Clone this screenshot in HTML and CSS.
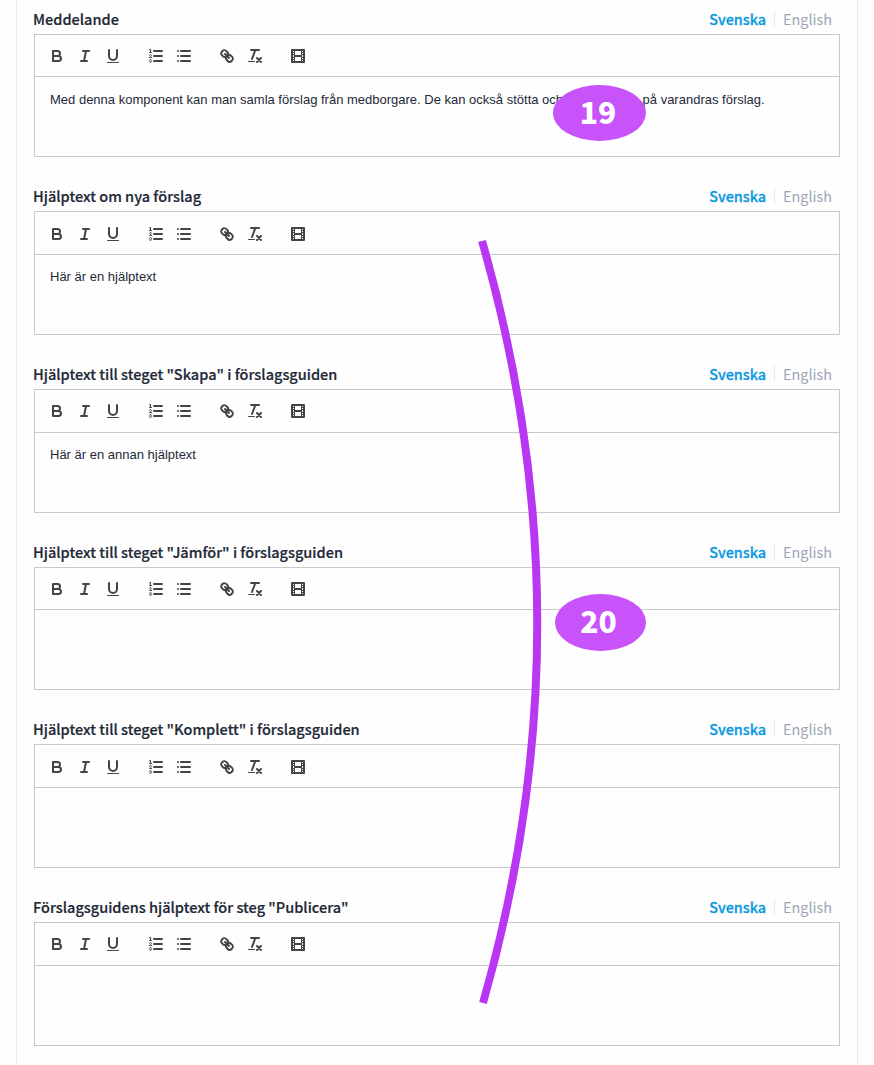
FILE: index.html
```
<!DOCTYPE html>
<html lang="sv">
<head>
<meta charset="utf-8">
<title>Komponentinställningar</title>
<link rel="stylesheet" href="styles.css">
</head>
<body>
<svg class="sprite" aria-hidden="true">
  <symbol id="toolbar" viewBox="0 0 270 24">
    <g transform="translate(5 3)">
      <path d="M5,4H9.5a2.5,2.5,0,0,1,0,5H5ZM5,9h5.5a2.5,2.5,0,0,1,0,5H5Z"/>
    </g>
    <g transform="translate(33 3)"><path d="M7,4H13M5,14H11M8,14L10,4"/></g>
    <g transform="translate(61 3)">
      <path d="M5,3V9a4,4,0,0,0,8,0V3"/>
      <rect class="solid" x="3" y="15" width="12" height="1" rx=".5"/>
    </g>
    <g transform="translate(104 3)">
      <path d="M7,4H15M7,9H15M7,14H15"/>
      <path class="thin" d="M2.5,5.5H4.5M4.5,10.5h-2c0-.234,1.85-1.076,1.85-2.234A.959.959,0,0,0,2.5,8.156M2.5,14.846a.959.959,0,0,0,1.85-.109A.7.7,0,0,0,3.75,14a.688.688,0,0,0,.6-.736.959.959,0,0,0-1.85-.109"/>
      <path class="solid" d="M3.5,6A.5.5,0,0,1,3,5.5V3.085l-.276.138A.5.5,0,0,1,2.053,3c-.124-.247-.023-.324.224-.447l1-.5A.5.5,0,0,1,4,2.5v3A.5.5,0,0,1,3.5,6Z"/>
    </g>
    <g transform="translate(132 3)"><path d="M6,4H15M6,9H15M6,14H15M3,4H3M3,9H3M3,14H3"/></g>
    <g transform="translate(175 3)">
      <path d="M7,7L11,11M8.9,4.577a3.476,3.476,0,0,1,.36,4.679A3.476,3.476,0,0,1,4.577,8.9C3.185,7.5,2.035,6.4,4.217,4.217S7.5,3.185,8.9,4.577ZM13.423,9.1a3.476,3.476,0,0,0-4.679-.36,3.476,3.476,0,0,0,.36,4.679c1.392,1.392,2.5,2.542,4.679.36S14.815,10.5,13.423,9.1Z"/>
    </g>
    <g transform="translate(203 3)">
      <path d="M5,3H13M6,12L9.35,3M11,11L15,15M15,11L11,15"/>
      <rect class="solid" x="2" y="14" width="7" height="1" rx=".5"/>
    </g>
    <g transform="translate(246 3)">
      <rect x="3" y="3" width="12" height="12"/>
      <path class="solid" d="M5,3h1v12H5ZM12,3h1v12h-1ZM5,8h8v2H5ZM3,5h3v1H3ZM3,7h3v1H3ZM3,10h3v1H3ZM3,12h3v1H3ZM12,5h3v1h-3ZM12,7h3v1h-3ZM12,10h3v1h-3ZM12,12h3v1h-3Z"/>
    </g>
  </symbol>
</svg>
<main class="card">
  <section class="field">
    <header class="head"><h2 class="label">Meddelande</h2><nav class="tabs"><a class="tab active">Svenska</a><a class="tab">English</a></nav></header>
    <div class="toolbar"><svg class="tools"><use href="#toolbar"/></svg></div>
    <div class="editor"><span>Med denna komponent kan man samla förslag från medborgare. De kan också stötta och</span><span class="after-badge">på varandras förslag.</span></div>
  </section>
  <section class="field">
    <header class="head"><h2 class="label">Hjälptext om nya förslag</h2><nav class="tabs"><a class="tab active">Svenska</a><a class="tab">English</a></nav></header>
    <div class="toolbar"><svg class="tools"><use href="#toolbar"/></svg></div>
    <div class="editor">Här är en hjälptext</div>
  </section>
  <section class="field">
    <header class="head"><h2 class="label">Hjälptext till steget "Skapa" i förslagsguiden</h2><nav class="tabs"><a class="tab active">Svenska</a><a class="tab">English</a></nav></header>
    <div class="toolbar"><svg class="tools"><use href="#toolbar"/></svg></div>
    <div class="editor">Här är en annan hjälptext</div>
  </section>
  <section class="field">
    <header class="head"><h2 class="label">Hjälptext till steget "Jämför" i förslagsguiden</h2><nav class="tabs"><a class="tab active">Svenska</a><a class="tab">English</a></nav></header>
    <div class="toolbar"><svg class="tools"><use href="#toolbar"/></svg></div>
    <div class="editor"></div>
  </section>
  <section class="field">
    <header class="head"><h2 class="label">Hjälptext till steget "Komplett" i förslagsguiden</h2><nav class="tabs"><a class="tab active">Svenska</a><a class="tab">English</a></nav></header>
    <div class="toolbar"><svg class="tools"><use href="#toolbar"/></svg></div>
    <div class="editor"></div>
  </section>
  <section class="field">
    <header class="head"><h2 class="label">Förslagsguidens hjälptext för steg "Publicera"</h2><nav class="tabs"><a class="tab active">Svenska</a><a class="tab">English</a></nav></header>
    <div class="toolbar"><svg class="tools"><use href="#toolbar"/></svg></div>
    <div class="editor"></div>
  </section>
</main>
<svg class="curve" viewBox="0 0 874 1065"><path d="M482,241Q592,622 483,1003"/></svg>
<div class="badge first">19</div>
<div class="badge second">20</div>
</body>
</html>
```
FILE: styles.css
```
* { box-sizing: border-box; }
body {
  position: relative;
  margin: 0;
  height: 1065px;
  overflow: hidden;
  background: #fefefe;
  color: #1f2937;
  font-family: "Noto Sans CJK JP", "Noto Sans CJK SC", sans-serif;
}
.sprite { position: absolute; width: 0; height: 0; }
.card {
  width: 842px;
  height: 1065px;
  margin-left: 16px;
  padding: 7.6px 17px 0;
  border: solid #ececec;
  border-width: 0 1px;
}
.field { height: 177.7px; }
.head {
  display: flex;
  justify-content: space-between;
  align-items: center;
  height: 26px;
  padding: 0 8px 4px 0;
  margin-left: -1px;
}
.label {
  margin: 0;
  font-size: 14.53px;
  line-height: 22px;
  font-weight: 500;
  white-space: nowrap;
  -webkit-text-stroke: .2px currentColor;
}
.tabs { display: flex; align-items: center; }
.tab { font-size: 14.4px; line-height: 16px; color: #9ba5b7; padding-left: 8px; border-left: 1px solid #e8e8e8; }
.tab.active {
  color: #0d99e0;
  font-weight: 500;
  padding: 0 8px 0 0;
  border: 0;
  -webkit-text-stroke: .3px currentColor;
}
.toolbar { height: 43.65px; padding: 9.4px 8px 8px; border: 1px solid #c8c9c9; }
.tools {
  display: block;
  width: 270px;
  height: 24px;
  fill: none;
  stroke: #444;
  stroke-width: 2;
  stroke-linecap: round;
  stroke-linejoin: round;
}
.solid { fill: #444; stroke: none; }
.thin { stroke-width: 1; }
.editor {
  height: 80px;
  padding: 11.4px 15px;
  border: 1px solid #c8c9c9;
  border-top: 0;
  font: 13px/22px "Liberation Sans", Arial, sans-serif;
  white-space: nowrap;
}
.after-badge { margin-left: 79.5px; }
.curve { position: absolute; inset: 0; width: 874px; height: 1065px; fill: none; stroke: #b936f3; stroke-width: 8; pointer-events: none; }
.badge {
  position: absolute;
  display: flex;
  align-items: center;
  justify-content: center;
  border-radius: 50%;
  background: #c853fa;
  color: #fff;
  font-size: 30px;
  font-weight: 900;
  line-height: 1;
}
.first { left: 553px; top: 85px; width: 93px; height: 56px; padding: 0 3px 5px 0; }
.second { left: 554.5px; top: 594px; width: 91px; height: 56.5px; padding: 0 3px 5px 0; }
```
